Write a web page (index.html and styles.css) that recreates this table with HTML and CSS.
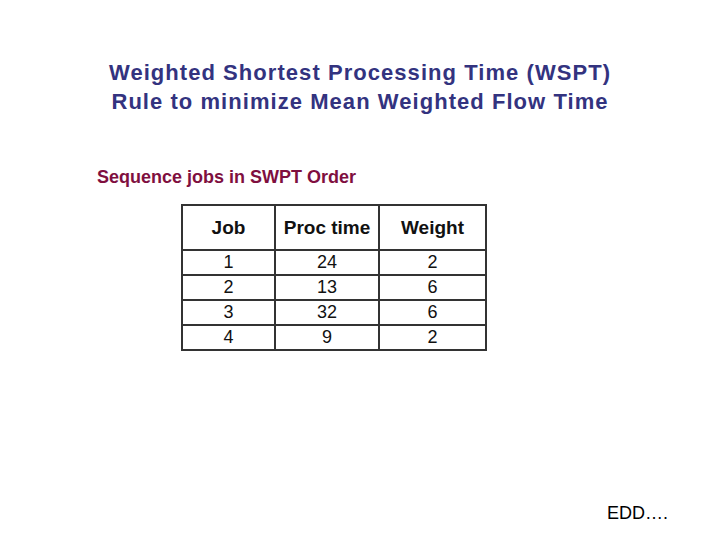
FILE: index.html
```html
<!DOCTYPE html>
<html>
<head>
<meta charset="utf-8">
<link rel="stylesheet" href="styles.css">
</head>
<body>
<div class="slide">
  <h1 class="title">Weighted Shortest Processing Time (WSPT)<br>Rule to minimize Mean Weighted Flow Time</h1>
  <p class="subtitle">Sequence jobs in SWPT Order</p>
  <table class="jobs">
    <thead>
      <tr><th class="c1">Job</th><th class="c2">Proc time</th><th class="c3">Weight</th></tr>
    </thead>
    <tbody>
      <tr><td>1</td><td>24</td><td>2</td></tr>
      <tr><td>2</td><td>13</td><td>6</td></tr>
      <tr><td>3</td><td>32</td><td>6</td></tr>
      <tr><td>4</td><td>9</td><td>2</td></tr>
    </tbody>
  </table>
  <div class="footer"><span class="edd">EDD….</span></div>
</div>
</body>
</html>
```
FILE: styles.css
```css
html, body {
  margin: 0;
  padding: 0;
  background: #ffffff;
}
.slide {
  width: 720px;
  height: 540px;
  display: flex;
  flex-direction: column;
  align-items: flex-start;
  font-family: "Liberation Sans", Arial, sans-serif;
  box-sizing: border-box;
  padding-top: 58px;
}
.title {
  align-self: stretch;
  margin: 0;
  font-size: 22px;
  font-weight: bold;
  line-height: 29px;
  color: #33337f;
  text-align: center;
  letter-spacing: 1.05px;
}
.subtitle {
  margin: 50px 0 0 97px;
  font-size: 18px;
  font-weight: bold;
  line-height: 22px;
  color: #7f0f3f;
}
.jobs {
  margin: 16px 0 0 181px;
  border-collapse: collapse;
  font-size: 18px;
  color: #111111;
}
.jobs th, .jobs td {
  border: 2px solid #333333;
  text-align: center;
  padding: 0;
}
.jobs th {
  height: 43px;
  font-weight: bold;
  font-size: 19px;
}
.jobs td {
  height: 23px;
  line-height: 23px;
}
.c1 { width: 91px; }
.c2 { width: 102px; }
.c3 { width: 105px; }
.footer {
  align-self: stretch;
  margin-top: auto;
  display: flex;
  justify-content: flex-end;
  padding: 0 52px 16px 0;
}
.edd {
  font-size: 18px;
  color: #000000;
  line-height: 22px;
}
```
